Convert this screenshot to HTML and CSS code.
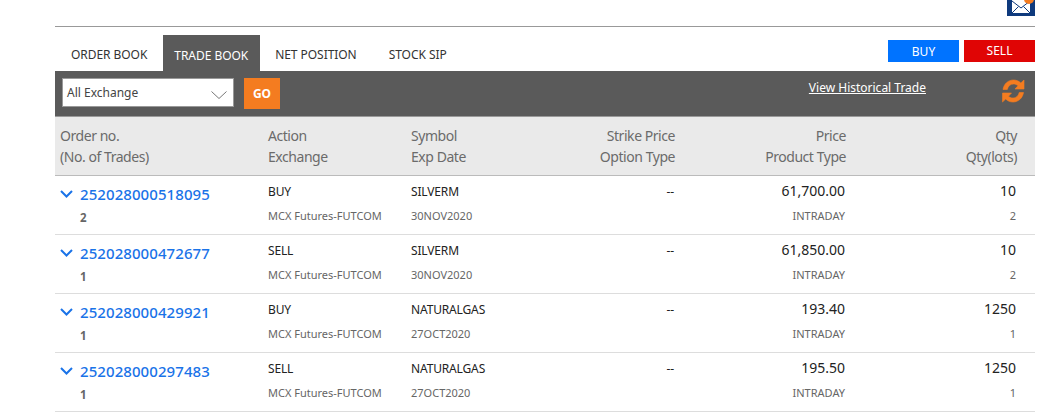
FILE: index.html
```html
<!DOCTYPE html>
<html lang="en">
<head>
  <meta charset="UTF-8">
  <title>Trade Book</title>
  <link rel="stylesheet" href="styles.css">
</head>
<body>
  <div class="container">
    <div class="topbar">
      <div class="mail">
        <svg width="28" height="16" viewBox="0 0 28 16">
          <rect width="28" height="16" fill="#0f3a7d"/>
          <path d="M5 0 L5 13 L23 13 L23 0 Z" fill="#fff"/>
          <path d="M5 1 L14 8 L23 1 M5 13 L11.500 6.500 M23 13 L16.500 6.500" fill="none" stroke="#0f3a7d" stroke-width="1"/>
          <circle cx="22" cy="-1" r="5" fill="#f47c20"/>
        </svg>
      </div>
    </div>

    <div class="tabbar">
      <nav class="tabs">
        <a class="tab">ORDER BOOK</a>
        <a class="tab active">TRADE BOOK</a>
        <a class="tab">NET POSITION</a>
        <a class="tab">STOCK SIP</a>
      </nav>
      <div class="actions">
        <button class="btn-buy">BUY</button>
        <button class="btn-sell">SELL</button>
      </div>
    </div>

    <div class="toolbar">
      <div class="select">
        <span>All Exchange</span>
        <svg width="16" height="8" viewBox="0 0 16 8"><path d="M0.500 0.500 L8 7.500 L15.500 0.500" fill="none" stroke="#777" stroke-width="1"/></svg>
      </div>
      <button class="btn-go">GO</button>
      <a class="history">View Historical Trade</a>
      <svg class="refresh" width="24" height="24" viewBox="0 0 24 24">
        <path d="M2 10.500 C3 4.500 7.500 1 12.500 1 C15.500 1 18 2.200 19.800 4 L23 1 V10 H14 L17 6.800 C15.800 5.600 14.300 5 12.500 5 C9.500 5 7 7 6.300 10.500 Z" fill="#f47c20" stroke="#f47c20" stroke-width="0.600"/>
        <path d="M22.500 13.500 C21.500 19.500 17 23 12 23 C9 23 6.500 21.800 4.700 20 L1.500 23 V14 H10.500 L7.500 17.200 C8.700 18.400 10.200 19 12 19 C15 19 17.500 17 18.200 13.500 Z" fill="#f47c20" stroke="#f47c20" stroke-width="0.600"/>
      </svg>
    </div>

    <div class="row head">
      <div>Order no.<br>(No. of Trades)</div>
      <div>Action<br>Exchange</div>
      <div>Symbol<br>Exp Date</div>
      <div class="num">Strike Price<br>Option Type</div>
      <div class="num">Price<br>Product Type</div>
      <div class="num">Qty<br>Qty(lots)</div>
    </div>

    <div class="row trade">
      <div class="order">
        <a class="order-no"><svg width="13" height="8" viewBox="0 0 13 8"><path d="M1 1 L6.500 6.500 L12 1" fill="none" stroke="#1a73e8" stroke-width="2"/></svg>252028000518095</a>
        <span class="count">2</span>
      </div>
      <div><span class="main">BUY</span><span class="sub">MCX Futures-FUTCOM</span></div>
      <div><span class="main">SILVERM</span><span class="sub">30NOV2020</span></div>
      <div class="num"><span class="main">--</span></div>
      <div class="num"><span class="main big">61,700.00</span><span class="sub">INTRADAY</span></div>
      <div class="num"><span class="main big">10</span><span class="sub">2</span></div>
    </div>

    <div class="row trade">
      <div class="order">
        <a class="order-no"><svg width="13" height="8" viewBox="0 0 13 8"><path d="M1 1 L6.500 6.500 L12 1" fill="none" stroke="#1a73e8" stroke-width="2"/></svg>252028000472677</a>
        <span class="count">1</span>
      </div>
      <div><span class="main">SELL</span><span class="sub">MCX Futures-FUTCOM</span></div>
      <div><span class="main">SILVERM</span><span class="sub">30NOV2020</span></div>
      <div class="num"><span class="main">--</span></div>
      <div class="num"><span class="main big">61,850.00</span><span class="sub">INTRADAY</span></div>
      <div class="num"><span class="main big">10</span><span class="sub">2</span></div>
    </div>

    <div class="row trade">
      <div class="order">
        <a class="order-no"><svg width="13" height="8" viewBox="0 0 13 8"><path d="M1 1 L6.500 6.500 L12 1" fill="none" stroke="#1a73e8" stroke-width="2"/></svg>252028000429921</a>
        <span class="count">1</span>
      </div>
      <div><span class="main">BUY</span><span class="sub">MCX Futures-FUTCOM</span></div>
      <div><span class="main">NATURALGAS</span><span class="sub">27OCT2020</span></div>
      <div class="num"><span class="main">--</span></div>
      <div class="num"><span class="main big">193.40</span><span class="sub">INTRADAY</span></div>
      <div class="num"><span class="main big">1250</span><span class="sub">1</span></div>
    </div>

    <div class="row trade">
      <div class="order">
        <a class="order-no"><svg width="13" height="8" viewBox="0 0 13 8"><path d="M1 1 L6.500 6.500 L12 1" fill="none" stroke="#1a73e8" stroke-width="2"/></svg>252028000297483</a>
        <span class="count">1</span>
      </div>
      <div><span class="main">SELL</span><span class="sub">MCX Futures-FUTCOM</span></div>
      <div><span class="main">NATURALGAS</span><span class="sub">27OCT2020</span></div>
      <div class="num"><span class="main">--</span></div>
      <div class="num"><span class="main big">195.50</span><span class="sub">INTRADAY</span></div>
      <div class="num"><span class="main big">1250</span><span class="sub">1</span></div>
    </div>
  </div>
</body>
</html>
```

FILE: styles.css
```css
* {
  box-sizing: border-box;
}
body {
  font-family: "Noto Sans", Arial, sans-serif;
  background-color: #fff;
  color: #222;
  margin: 0;
  overflow: hidden;
}
.container {
  width: 980px;
  margin-left: 55px;
}
.topbar {
  height: 27px;
  border-bottom: 1px solid #999;
  display: flex;
  justify-content: flex-end;
  align-items: flex-start;
}
.mail {
  height: 16px;
  line-height: 0;
}
.tabbar {
  margin-top: 8px;
  height: 36px;
  display: flex;
  justify-content: space-between;
}
.tabs {
  display: flex;
}
.tab {
  font-size: 12px;
  letter-spacing: -0.05px;
  color: #333;
  padding: 11px 16px 0;
}
.tab.active {
  background: #5a5a5a;
  color: #fff;
  padding: 12px 12px 0 11px;
  margin-right: -1px;
}
.actions {
  display: flex;
  gap: 5px;
  padding-top: 5px;
  height: 27px;
}
.actions button {
  width: 71px;
  height: 22px;
  border: none;
  color: #fff;
  font: 12px "Noto Sans", Arial, sans-serif;
  padding: 0;
}
.btn-buy {
  background: #0073ff;
}
.actions .btn-sell {
  background: #e00505;
  padding-bottom: 2px;
}
.toolbar {
  height: 46px;
  background: #5a5a5a;
  border-bottom: 1px solid #999;
  display: flex;
  align-items: flex-start;
  padding: 7px 10px 0 7px;
}
.select {
  width: 172px;
  height: 29px;
  background: #fff;
  border: 1px solid #999;
  font-size: 12px;
  color: #444;
  display: flex;
  align-items: center;
  justify-content: space-between;
  padding: 0 6px 0 4px;
}
.select svg {
  margin-top: 4px;
}
.btn-go {
  margin-left: 10px;
  width: 36px;
  height: 31px;
  background: #f47c20;
  border: none;
  color: #fff;
  font: bold 12px "Noto Sans", Arial, sans-serif;
  padding: 0;
}
.history {
  margin-left: auto;
  margin-right: 75px;
  margin-top: 1px;
  color: #fff;
  font-size: 12px;
  text-decoration: underline;
}
.refresh {
  margin-top: 1px;
}
.row {
  display: grid;
  grid-template-columns: 208px 143px 143px 121px 171px 171px;
  padding: 0 18px 0 5px;
}
.num {
  text-align: right;
}
.head {
  height: 59px;
  background: #eaeaea;
  border-bottom: 1px solid #bbb;
  color: #6b6b6b;
  font-size: 14px;
  letter-spacing: -0.45px;
  line-height: 21px;
  padding-top: 8px;
}
.trade {
  height: 59px;
  border-bottom: 1px solid #ddd;
  padding-top: 6px;
}
.trade .num {
  padding-right: 1px;
}
.main {
  display: block;
  font-size: 12px;
  letter-spacing: -0.15px;
  line-height: 20px;
  color: #222;
}
.main.big {
  font-size: 14px;
  letter-spacing: 0;
  line-height: 20px;
  margin-top: -1px;
}
.sub {
  display: block;
  font-size: 11px;
  line-height: 18px;
  margin-top: 5px;
  color: #666;
}
.big + .sub {
  margin-top: 6px;
}
.order-no {
  display: flex;
  align-items: center;
  gap: 7px;
  font-size: 15px;
  letter-spacing: 0.08px;
  line-height: 24px;
  font-weight: 500;
  color: #1a73e8;
}
.count {
  display: block;
  font-size: 11.500px;
  font-weight: bold;
  color: #666;
  line-height: 18px;
  margin: 3px 0 0 20px;
}
```
